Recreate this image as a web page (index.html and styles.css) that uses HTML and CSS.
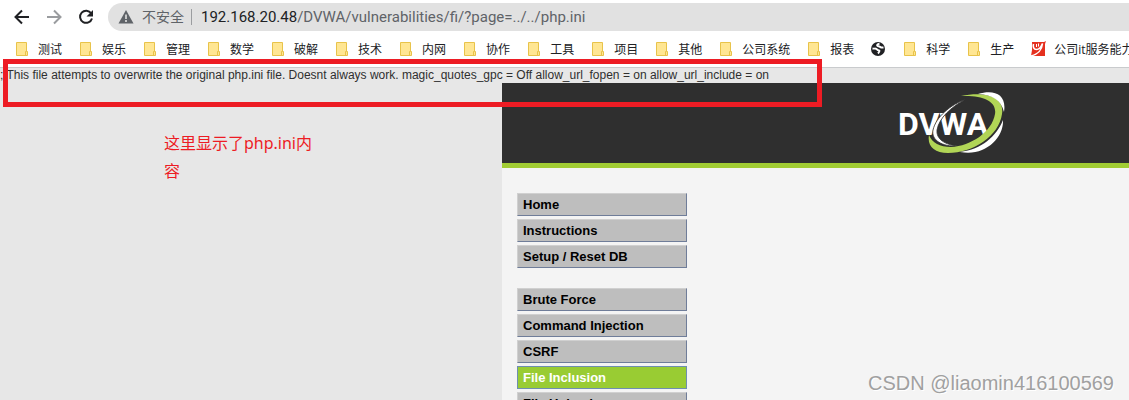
FILE: index.html
```html
<!DOCTYPE html>
<html lang="zh-CN">
<head>
<meta charset="utf-8">
<title>DVWA :: File Inclusion</title>
<link rel="stylesheet" href="styles.css">
</head>
<body>
<svg class="defs" aria-hidden="true">
  <symbol id="folder" viewBox="0 0 16 16">
    <path d="M2.5 1.5h10v9h1v4h-11z" fill="#ffe693" stroke="#e8c34a"/>
    <path d="M11.5 14v-3.500h1" fill="none" stroke="#e8c34a"/>
  </symbol>
</svg>

<header class="browser">
  <div class="toolbar">
    <button class="tool" type="button" aria-label="后退"><svg viewBox="0 0 16 16"><path d="M15 8H2M8 1.500L1.500 8 8 14.500" fill="none" stroke="#202124" stroke-width="2"/></svg></button>
    <button class="tool" type="button" aria-label="前进"><svg viewBox="0 0 16 16"><path d="M1 8h13M8 1.500L14.500 8 8 14.500" fill="none" stroke="#9a9c9f" stroke-width="2"/></svg></button>
    <button class="tool" type="button" aria-label="刷新"><svg viewBox="0 0 16 16"><path d="M13.200 4.300A6.100 6.100 0 1 0 14 9.500" fill="none" stroke="#202124" stroke-width="2"/><path d="M15 1v6.500H8.500z" fill="#202124"/></svg></button>
    <div class="address">
      <svg class="warning" viewBox="0 0 16 16" aria-hidden="true"><path d="M8 1l7.500 13.500H.5z" fill="#5f6368"/><path d="M8 5.500v4.500M8 11v2" stroke="#e1e1e1" stroke-width="1.600"/></svg>
      <span class="insecure">不安全</span>
      <span class="url"><span class="host">192.168.20.48</span>/DVWA/vulnerabilities/fi/?page=../../php.ini</span>
    </div>
  </div>
  <nav class="bookmarks" aria-label="书签">
    <a href="#"><svg><use href="#folder"/></svg>测试</a>
    <a href="#"><svg><use href="#folder"/></svg>娱乐</a>
    <a href="#"><svg><use href="#folder"/></svg>管理</a>
    <a href="#"><svg><use href="#folder"/></svg>数学</a>
    <a href="#"><svg><use href="#folder"/></svg>破解</a>
    <a href="#"><svg><use href="#folder"/></svg>技术</a>
    <a href="#"><svg><use href="#folder"/></svg>内网</a>
    <a href="#"><svg><use href="#folder"/></svg>协作</a>
    <a href="#"><svg><use href="#folder"/></svg>工具</a>
    <a href="#"><svg><use href="#folder"/></svg>项目</a>
    <a href="#"><svg><use href="#folder"/></svg>其他</a>
    <a href="#"><svg><use href="#folder"/></svg>公司系统</a>
    <a href="#"><svg><use href="#folder"/></svg>报表</a>
    <a href="#" aria-label="网站"><svg viewBox="0 0 16 16"><circle cx="8" cy="8" r="7" fill="#202124"/><path d="M2.500 7.500c2 .3 3-.3 4 .5s.8 1.300 2 1.300 1.500 1-.5 3.200M9.500 2.800c-3 .4-3 2.200-1 2.400s1.500 1.800 5 1.300" fill="none" stroke="#fff" stroke-width="1.900"/></svg></a>
    <a href="#"><svg><use href="#folder"/></svg>科学</a>
    <a href="#"><svg><use href="#folder"/></svg>生产</a>
    <a href="#"><svg viewBox="0 0 16 16"><path d="M2 1h12l2-1-1 3v12H1l1-6z" fill="#e5301f"/><path d="M3.500 3c-.8 3 .2 5.500 3 5.500S11 6 12.500 2.500C12 8 10 12.500 1 15" fill="none" stroke="#fff" stroke-width="1.600"/><path d="M6.500 3v3M8.500 2.500v3" stroke="#fff"/></svg>公司it服务能力</a>
  </nav>
</header>

<main class="page">
  <p class="output">; This file attempts to overwrite the original php.ini file. Doesnt always work. magic_quotes_gpc = Off allow_url_fopen = on allow_url_include = on</p>
  <div class="columns">
    <div class="margin"><p class="note">这里显示了php.ini内容</p></div>
    <div class="container">
      <div class="banner">
        <svg class="logo" viewBox="0 0 110 64" role="img" aria-label="DVWA">
          <text class="logo-text" x="2" y="43">DVWA</text>
          <path d="M70 7C54 13 40 25 37 38c-2 10 9 17 25 16-13-1-22-7-21-16C43 26 55 15 70 7z" fill="#fff" stroke="#2f2f2f" stroke-width=".8"/>
          <path d="M65 4C88-1 109 4 106 22c-3 22-29 39-54 39-14 0-21-7-19-18 3 8 11 12 22 12 20-1 41-15 44-33C101 9 87 3 65 4z" fill="#b1d556"/>
          <path d="M82 2c16-5 29 0 26 18C105 8 97 3 82 2zM107 28c1 18-18 37-43 32 22-3 36-15 43-32z" fill="#fff"/>
        </svg>
      </div>
      <nav class="menu" aria-label="DVWA">
        <ul>
          <li><a href="#">Home</a></li>
          <li><a href="#">Instructions</a></li>
          <li><a href="#">Setup / Reset DB</a></li>
        </ul>
        <ul>
          <li><a href="#">Brute Force</a></li>
          <li><a href="#">Command Injection</a></li>
          <li><a href="#">CSRF</a></li>
          <li><a class="selected" href="#">File Inclusion</a></li>
          <li><a href="#">File Upload</a></li>
        </ul>
      </nav>
    </div>
  </div>
</main>
<div class="highlight"></div>
<div class="watermark">CSDN @liaomin416100569</div>
</body>
</html>
```
FILE: styles.css
```css
* { box-sizing: border-box; }
html, body { height: 100%; }
body {
  margin: 0;
  display: flex;
  flex-direction: column;
  overflow: hidden;
  position: relative;
  background: #e7e7e7;
  font-family: "Liberation Sans", "Noto Sans CJK SC", sans-serif;
}
p, ul { margin: 0; padding: 0; }
a { color: inherit; text-decoration: none; }
.defs { display: none; }

.browser {
  flex: none;
  background: #fff;
  border-bottom: 1px solid #c9cbcd;
  font-family: "Open Sans", "Noto Sans CJK SC", sans-serif;
}
.toolbar {
  display: flex;
  align-items: center;
  gap: 16px;
  padding: 3px 0 0 14px;
}
.tool {
  display: flex;
  width: 16px;
  height: 16px;
  padding: 0;
  border: 0;
  background: none;
}
.tool svg { width: 16px; height: 16px; }
.address {
  flex: 1;
  display: flex;
  align-items: center;
  height: 28px;
  margin-left: -2px;
  padding-left: 10px;
  border-radius: 14px 0 0 14px;
  background: #e1e1e1;
  color: #5f6368;
  white-space: nowrap;
}
.warning { width: 16px; height: 16px; margin-right: 8px; }
.insecure {
  padding-right: 7px;
  border-right: 1px solid #9b9da0;
  font-size: 14px;
  line-height: 16px;
}
.url { margin-left: 9px; font-family: Roboto, sans-serif; font-size: 15px; }
.host { color: #202124; }
.bookmarks {
  display: flex;
  gap: 16px;
  height: 36px;
  padding-left: 14px;
  overflow: hidden;
  color: #202124;
  font-size: 12px;
  white-space: nowrap;
}
.bookmarks a { flex: none; display: flex; align-items: center; gap: 8px; }
.bookmarks svg { width: 16px; height: 16px; }

.page { flex: 1; min-height: 0; display: flex; flex-direction: column; }
.output { height: 15px; color: #2f2f2f; font-size: 12px; line-height: 15px; white-space: nowrap; }
.columns { flex: 1; min-height: 0; display: flex; }
.margin { flex: none; width: 502px; padding: 46px 0 0 164px; }
.note { width: 152px; color: #ed1c24; font-family: "Noto Sans", "Noto Sans CJK SC", sans-serif; font-size: 16px; line-height: 28px; }
.container { flex: 1; min-width: 0; background: #f4f4f4; }
.banner {
  display: flex;
  justify-content: flex-end;
  height: 85px;
  padding: 9px 123px 0 0;
  border-bottom: 5px solid #a1cc33;
  background: #2f2f2f;
}
.logo { width: 110px; height: 64px; }
.logo-text { fill: #fff; font-family: Roboto, sans-serif; font-size: 32px; font-weight: 700; }
.menu { display: flex; flex-direction: column; gap: 20px; padding: 25px 15px; }
.menu ul { display: flex; flex-direction: column; gap: 3px; list-style: none; }
.menu a {
  display: block;
  width: 170px;
  height: 23px;
  padding-left: 5px;
  border: 1px solid;
  border-color: #d0d0d0 #6f7d99 #6f7d99 #d0d0d0;
  background: #bebebe;
  color: #000;
  font-size: 13px;
  font-weight: 700;
  line-height: 21px;
}
.menu .selected { border-color: #6f8fb0; background: #9c3; color: #fff; }

.highlight {
  position: absolute;
  top: 59px;
  left: 3px;
  width: 819px;
  height: 48px;
  border: 5px solid #ed1c24;
}
.watermark {
  position: absolute;
  right: 15px;
  bottom: 5px;
  color: #a0a0a0;
  font-size: 20px;
  line-height: 24px;
  text-shadow: 1px 1px #fff;
}
```
